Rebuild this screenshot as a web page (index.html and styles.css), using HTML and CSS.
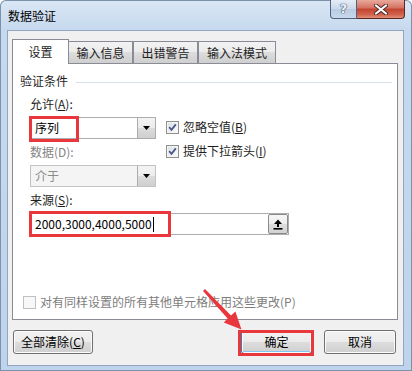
FILE: index.html
```html
<!DOCTYPE html>
<html lang="zh-CN">
<head>
    <meta charset="UTF-8">
    <meta name="viewport" content="width=device-width, initial-scale=1.0">
    <title>数据验证</title>
    <link rel="stylesheet" href="styles.css">
</head>
<body>
    <div class="window">
        <div class="titlebar">
            <span class="title">数据验证</span>
            <div class="caption">
                <span class="btn-help">?</span>
                <span class="btn-close">
                    <svg width="14" height="11" viewBox="0 0 14 11">
                        <path d="M2 1.5 L12 9.5 M12 1.5 L2 9.5" stroke="#4b2a28" stroke-width="4" stroke-linecap="round"/>
                        <path d="M2 1.5 L12 9.5 M12 1.5 L2 9.5" stroke="#fff" stroke-width="2.2" stroke-linecap="round"/>
                    </svg>
                </span>
            </div>
        </div>

        <div class="client">
            <div class="tabs">
                <span class="tab active">设置</span>
                <span class="tab t2">输入信息</span>
                <span class="tab t3">出错警告</span>
                <span class="tab t4">输入法模式</span>
            </div>

            <div class="panel">
                <div class="group-title"><span>验证条件</span><i></i></div>

                <div class="criteria">
                    <div class="left-col">
                        <div class="label">允许(<u>A</u>):</div>
                        <div class="combo">
                            <span class="combo-text">序列</span>
                            <span class="combo-btn">
                                <svg width="7" height="4" viewBox="0 0 7 4"><polygon points="0,0 7,0 3.5,4" fill="#000"/></svg>
                            </span>
                            <span class="mark mark-allow"></span>
                        </div>
                        <div class="label disabled">数据(D):</div>
                        <div class="combo off">
                            <span class="combo-text">介于</span>
                            <span class="combo-btn">
                                <svg width="7" height="4" viewBox="0 0 7 4"><polygon points="0,0 7,0 3.5,4" fill="#000"/></svg>
                            </span>
                        </div>
                    </div>
                    <div class="checks">
                        <div class="check">
                            <span class="box"><svg width="11" height="11" viewBox="0 0 11 11"><path d="M2.2 5.2 L4.5 7.8 L8.8 2.4" fill="none" stroke="#45598c" stroke-width="1.8"/></svg></span>
                            <span>忽略空值(<u>B</u>)</span>
                        </div>
                        <div class="check">
                            <span class="box"><svg width="11" height="11" viewBox="0 0 11 11"><path d="M2.2 5.2 L4.5 7.8 L8.8 2.4" fill="none" stroke="#45598c" stroke-width="1.8"/></svg></span>
                            <span>提供下拉箭头(<u>I</u>)</span>
                        </div>
                    </div>
                </div>

                <div class="label source-label">来源(<u>S</u>):</div>
                <div class="source">
                    <span class="source-text">2000,3000,4000,5000</span><span class="caret"></span>
                    <span class="pick-btn">
                        <svg width="10" height="11" viewBox="0 0 10 11">
                            <polygon points="5,0.5 9,5 6,5 6,8 4,8 4,5 1,5" fill="#000"/>
                            <rect x="0.5" y="9" width="9" height="1.6" fill="#000"/>
                        </svg>
                    </span>
                    <span class="mark mark-source"></span>
                </div>

                <div class="check apply-all">
                    <span class="box off"></span>
                    <span>对有同样设置的所有其他单元格应用这些更改(P)</span>
                </div>
            </div>

            <div class="buttons">
                <span class="btn clear">全部清除(<u>C</u>)</span>
                <span class="btn ok">确定<span class="mark mark-ok"></span></span>
                <span class="btn cancel">取消</span>
            </div>
        </div>

        <!-- annotation arrow -->
        <svg class="arrow" width="412" height="371" viewBox="0 0 412 371">
            <polygon points="205,289 231,315.6 235.4,311.6 241.5,329.5 223.8,322.6 227.6,318.4 203,291" fill="#e8383d"/>
        </svg>
    </div>
</body>
</html>
```

FILE: styles.css
```css
* {
    box-sizing: border-box;
}
body {
    margin: 0;
    width: 412px;
    height: 371px;
    overflow: hidden;
    background: #fff;
    font-family: "Noto Sans CJK SC", "Noto Sans", sans-serif;
    font-size: 12px;
    line-height: 16px;
    color: #1e1e1e;
}
u {
    text-decoration: underline;
    text-underline-offset: 1px;
}
.window {
    position: relative;
    width: 412px;
    height: 371px;
    padding: 0 8px 5px 7px;
    display: flex;
    flex-direction: column;
    background: linear-gradient(#dae7f5, #c6d9ee 30px, #bed4ec);
    border-radius: 6px 6px 0 0;
    box-shadow: inset 0 0 0 1px #7d92aa;
}
.titlebar {
    height: 30px;
    display: flex;
    align-items: flex-start;
}
.title {
    padding: 8px 0 0 1px;
    color: #000;
}
.caption {
    margin-left: auto;
    margin-right: -1px;
    display: flex;
}
.btn-help {
    width: 27px;
    height: 19px;
    border: 1px solid #4f6380;
    border-top: none;
    border-radius: 0 0 0 4px;
    background: linear-gradient(#e4ecf6, #cad8ea 50%, #b8cbe2 51%, #c9d9ec);
    text-align: center;
    font-family: "DejaVu Sans", sans-serif;
    font-weight: bold;
    font-size: 13px;
    line-height: 18px;
    color: #eef3f9;
    text-shadow: 0 0 1px #3b4d66, 0 0 1px #3b4d66, 0 0 1px #3b4d66;
}
.btn-close {
    width: 48px;
    height: 19px;
    border: 1px solid #5b2a26;
    border-left: none;
    border-top: none;
    border-radius: 0 0 4px 0;
    background: linear-gradient(#e9a99c, #d3705f 45%, #c2432f 50%, #d0614c 80%, #e08e75);
    display: flex;
    align-items: center;
    justify-content: center;
}
.client {
    flex: 1;
    display: flex;
    flex-direction: column;
    padding: 8px 5px 0 4px;
    background: #f0f0f0;
    border: 1px solid #92a6bf;
}
.tabs {
    display: flex;
    align-items: flex-end;
    height: 24px;
}
.tab {
    height: 22px;
    border: 1px solid #898c95;
    border-bottom: none;
    background: linear-gradient(#f2f2f2, #ebebeb 50%, #dddddd 50%, #cfcfcf);
    text-align: center;
    line-height: 21px;
    font-size: 12px;
}
.tab.active {
    position: relative;
    z-index: 1;
    width: 57px;
    height: 25px;
    margin-bottom: -1px;
    background: #fff;
    line-height: 23px;
}
.tab.t2 {
    width: 65px;
    margin-left: -1px;
}
.tab.t3 {
    width: 65px;
}
.tab.t4 {
    width: 78px;
}
.panel {
    height: 257px;
    border: 1px solid #898c95;
    background: #fff;
    padding: 9px 8px 9px 7px;
    display: flex;
    flex-direction: column;
}
.group-title {
    display: flex;
    align-items: center;
    gap: 8px;
    color: #1e1e1e;
}
.group-title i {
    flex: 1;
    height: 1px;
    margin-top: 2px;
    margin-right: -3px;
    background: #d5dfe5;
}
.criteria {
    display: grid;
    grid-template-columns: 126px 1fr;
    column-gap: 10px;
    margin-top: 7px;
    padding-left: 10px;
}
.label {
    height: 16px;
}
.label.disabled {
    color: #838383;
    margin-top: 5px;
}
.combo {
    position: relative;
    height: 22px;
    margin-top: 5px;
    border: 1px solid #acacac;
    background: #fff;
    display: flex;
    align-items: center;
}
.combo-text {
    flex: 1;
    padding-left: 4px;
    color: #000;
}
.combo-btn {
    width: 18px;
    height: 20px;
    border-left: 1px solid #acacac;
    background: linear-gradient(#f4f4f4, #ebebeb 50%, #dcdcdc 50%, #cfcfcf);
    display: flex;
    align-items: center;
    justify-content: center;
}
.combo.off {
    background: #f4f4f4;
    border-color: #c2c2c2;
}
.combo.off .combo-text {
    color: #8c8c8c;
}
.checks {
    padding-top: 23px;
    display: flex;
    flex-direction: column;
    gap: 8px;
}
.check {
    display: flex;
    align-items: center;
    gap: 4px;
    height: 16px;
    color: #1e1e1e;
}
.box {
    width: 13px;
    height: 13px;
    border: 1px solid #8e8f8f;
    background: linear-gradient(135deg, #dcdee1, #fdfdfd);
    box-shadow: inset 0 0 0 1px #f6f6f6;
    display: flex;
    align-items: center;
    justify-content: center;
}
.box.off {
    border-color: #c0c0c0;
    background: #f7f7f7;
    box-shadow: none;
}
.source-label {
    margin-top: 5px;
    padding-left: 10px;
}
.source {
    position: relative;
    margin: 5px 0 0 10px;
    width: 259px;
    height: 22px;
    border: 1px solid #acacac;
    display: flex;
    align-items: center;
    padding-left: 4px;
}
.source-text {
    color: #000;
}
.caret {
    width: 1px;
    height: 15px;
    margin-left: 1px;
    background: #000;
}
.pick-btn {
    margin-left: auto;
    width: 20px;
    height: 20px;
    border: 1px solid #8a8a8a;
    border-radius: 2px;
    background: linear-gradient(#f6f6f6, #ececec 50%, #dedede 50%, #d2d2d2);
    display: flex;
    align-items: center;
    justify-content: center;
}
.apply-all {
    margin-top: auto;
    margin-left: 3px;
    color: #7d7d7d;
}
.buttons {
    display: flex;
    margin-top: 10px;
}
.btn {
    position: relative;
    height: 24px;
    border: 1px solid #707070;
    border-radius: 3px;
    background: linear-gradient(#f2f2f2, #ebebeb 50%, #dddddd 50%, #cfcfcf);
    box-shadow: inset 0 0 0 1px #fbfbfb;
    text-align: center;
    line-height: 22px;
    color: #000;
}
.btn.clear {
    width: 80px;
    margin-left: 1px;
}
.btn.ok {
    width: 71px;
    margin-left: auto;
    border-color: #3c7fb1;
    box-shadow: inset 0 0 0 1px #fbfbfb, inset 0 -2px 0 #7fc8f2;
}
.btn.cancel {
    width: 72px;
    margin-left: 12px;
    margin-right: 2px;
}
.mark {
    position: absolute;
    border: 3px solid #e8383d;
    pointer-events: none;
}
.mark-allow {
    left: -2px;
    top: -2px;
    width: 50px;
    height: 26px;
}
.mark-source {
    left: -2px;
    top: -3px;
    width: 142px;
    height: 26px;
}
.mark-ok {
    left: -4px;
    top: -1px;
    width: 76px;
    height: 26px;
}
.arrow {
    position: absolute;
    left: 0;
    top: 0;
    pointer-events: none;
}
```
